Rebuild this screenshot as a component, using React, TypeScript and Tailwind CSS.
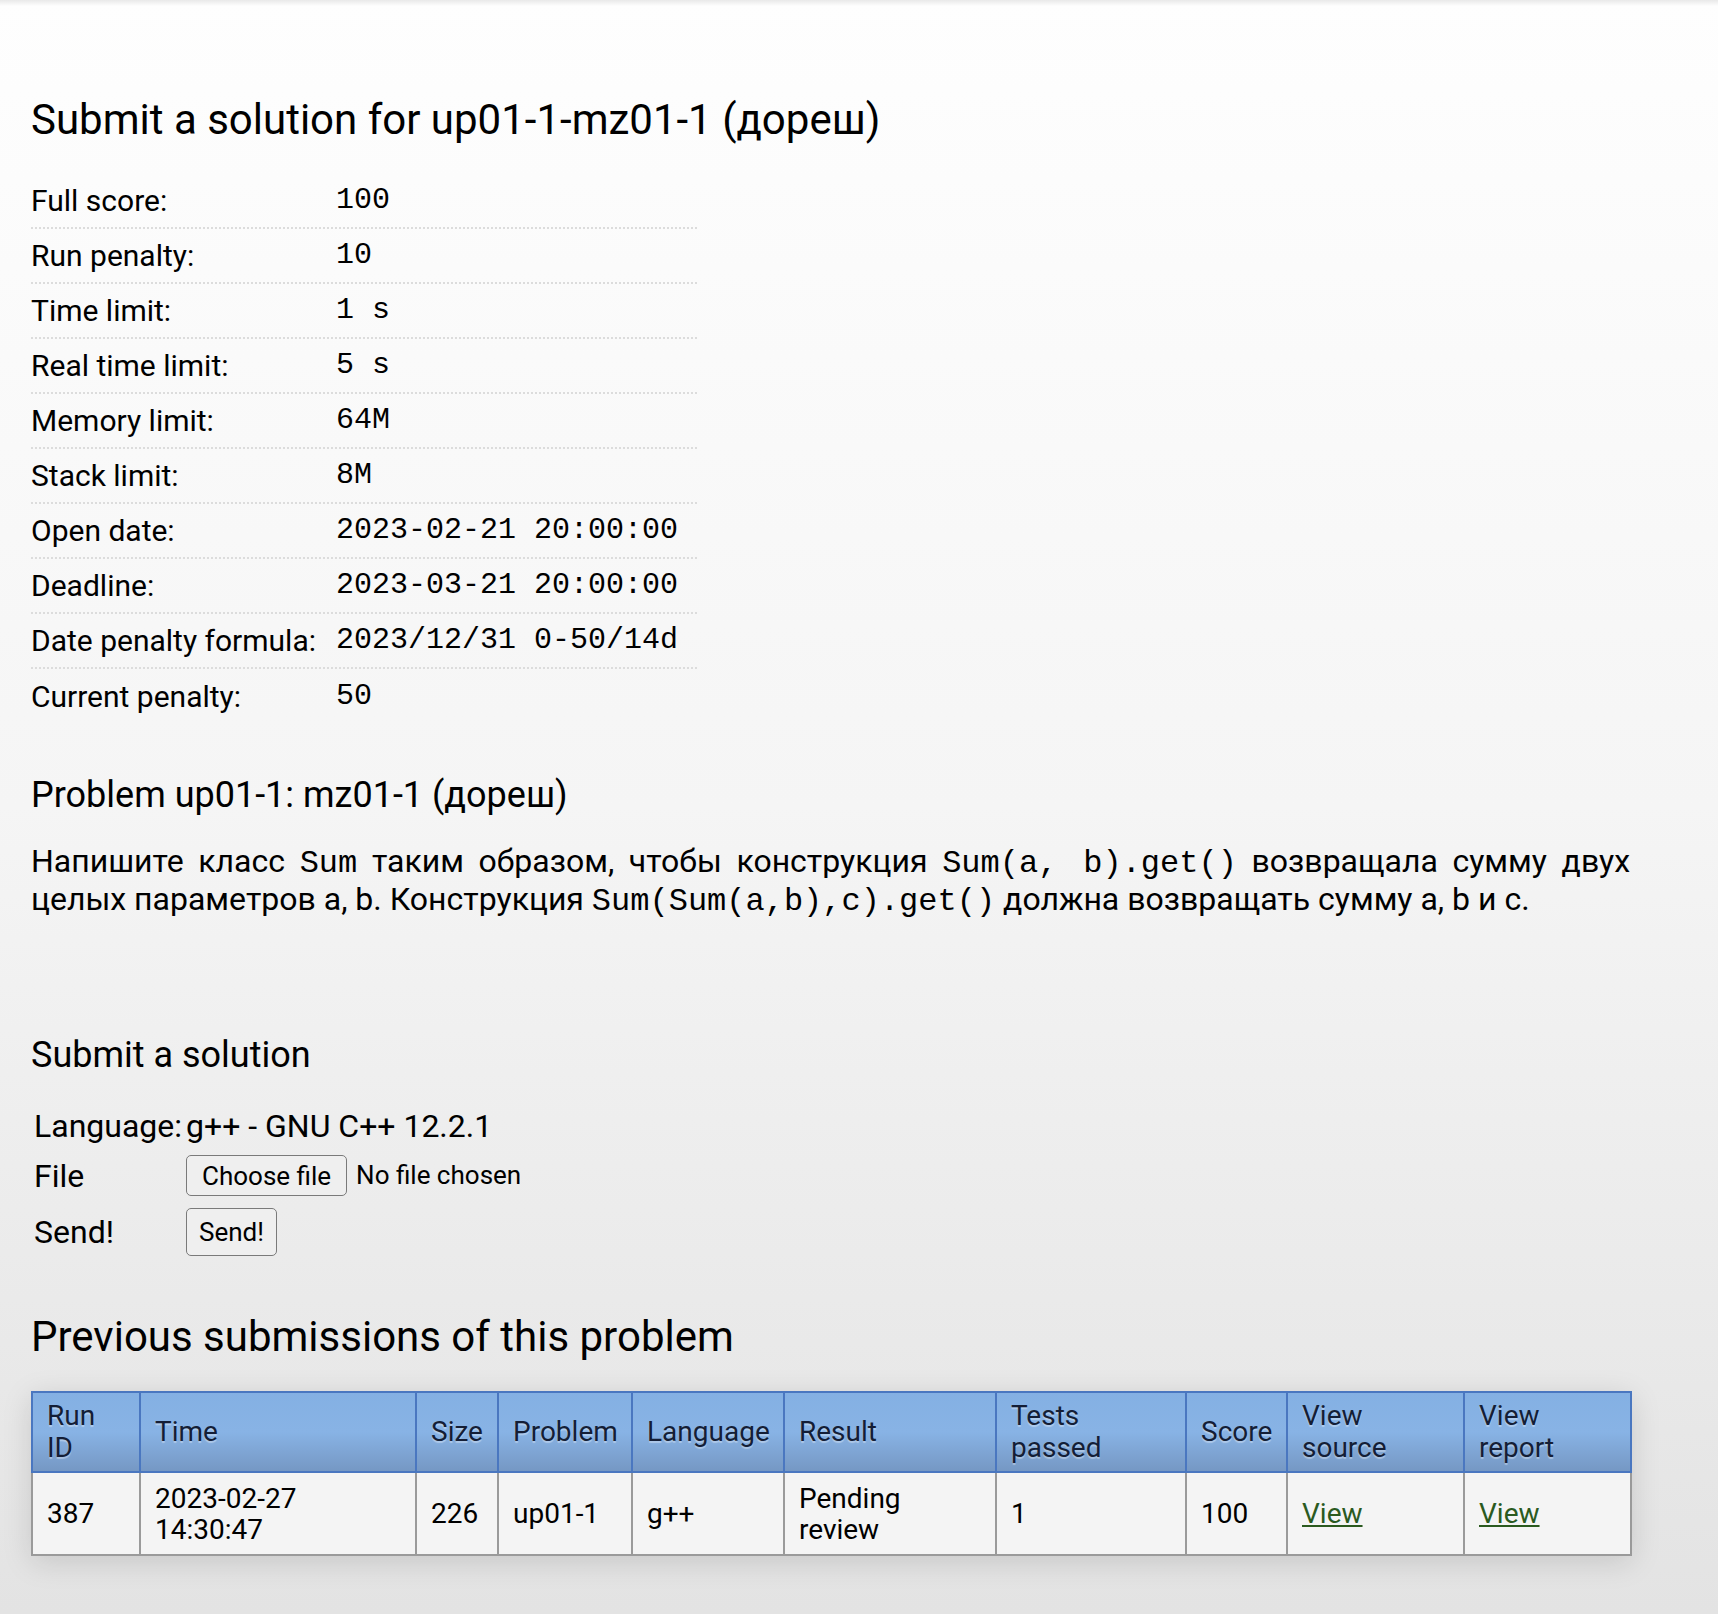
const info: [string, string][] = [
  ["Full score:", "100"],
  ["Run penalty:", "10"],
  ["Time limit:", "1 s"],
  ["Real time limit:", "5 s"],
  ["Memory limit:", "64M"],
  ["Stack limit:", "8M"],
  ["Open date:", "2023-02-21 20:00:00"],
  ["Deadline:", "2023-03-21 20:00:00"],
  ["Date penalty formula:", "2023/12/31 0-50/14d"],
  ["Current penalty:", "50"],
];

const cols = [108, 276, 82, 134, 152, 212, 190, 101, 177, 167];

const mono = "font-['Liberation_Mono','Courier_New',monospace]";
const code = `${mono} text-[32px] leading-none`;

export default function App() {
  return (
    <div className="min-h-[1614px] bg-gradient-to-b from-[#fefefe] via-[#f5f5f5] to-[#e3e3e3] font-['Roboto',sans-serif] text-black">
      <div className="h-[6px] bg-gradient-to-b from-[#e9e9e9] to-transparent" />
      <div className="pl-[31px] pr-[88px] pb-[40px]">
        {/* Title */}
        <h1 className="mt-[90px] text-[42px] leading-[48px] font-normal whitespace-nowrap">
          Submit a solution for up01-1-mz01-1 (дореш)
        </h1>

        {/* Problem info */}
        <div className="mt-[30px] w-[666px]">
          {info.map(([k, v], i) => (
            <div
              key={k}
              className={`grid grid-cols-[305px_1fr] items-center h-[55px] ${
                i < info.length - 1 ? "border-b-2 border-dotted border-[#dcdcdc]" : ""
              }`}
            >
              <div className="text-[30px]">{k}</div>
              <div className={`${mono} text-[30px] whitespace-pre`}>{v}</div>
            </div>
          ))}
        </div>

        {/* Statement */}
        <h2 className="mt-[49px] text-[36px] leading-[44px] font-normal">
          Problem up01-1: mz01-1 (дореш)
        </h2>
        <p className="mt-[25px] text-[32px] leading-[38px] text-justify">
          Напишите класс <span className={code}>Sum</span> таким образом, чтобы конструкция{" "}
          <span className={code}>Sum(a, b).get()</span> возвращала сумму двух целых параметров a,
          b. Конструкция <span className={code}>Sum(Sum(a,b),c).get()</span> должна возвращать
          сумму a, b и c.
        </p>

        {/* Submit form */}
        <h2 className="mt-[115px] text-[36px] leading-[44px] font-normal">Submit a solution</h2>
        <div className="mt-[26px] pl-[3px] text-[32px]">
          <div className="flex items-center h-[45px]">
            <div className="w-[152px]">Language:</div>
            <div>g++ - GNU C++ 12.2.1</div>
          </div>
          <div className="flex items-center h-[55px]">
            <div className="w-[152px]">File</div>
            <button className="h-[41px] px-[15px] border-[1.5px] border-[#7a7a7a] rounded-[5px] bg-[#efefef] text-[26px] leading-none">
              Choose file
            </button>
            <span className="ml-[9px] text-[26px]">No file chosen</span>
          </div>
          <div className="flex items-center h-[58px]">
            <div className="w-[152px]">Send!</div>
            <button className="h-[48px] px-[12px] border-[1.5px] border-[#7a7a7a] rounded-[5px] bg-[#efefef] text-[26px] leading-none">
              Send!
            </button>
          </div>
        </div>

        {/* Previous submissions */}
        <h2 className="mt-[52px] text-[42px] leading-[48px] font-normal">
          Previous submissions of this problem
        </h2>
        <table className="mt-[30px] w-[1599px] table-fixed border-collapse shadow-[0_6px_28px_rgba(0,0,0,0.13)]">
          <colgroup>
            {cols.map((w, i) => (
              <col key={i} style={{ width: w }} />
            ))}
          </colgroup>
          <thead>
            <tr className="h-[80px] bg-gradient-to-b from-[#84b0e3] via-[#88b3e5] to-[#7597c3]">
              {["Run ID", "Time", "Size", "Problem", "Language", "Result", "Tests passed", "Score", "View source", "View report"].map(
                (h) => (
                  <th
                    key={h}
                    className="border-2 border-[#4a77c0] px-[14px] text-left align-middle text-[28px] leading-[32px] font-normal text-[#141e36] [text-shadow:0_2px_1px_rgba(255,255,255,0.35)]"
                  >
                    {h}
                  </th>
                )
              )}
            </tr>
          </thead>
          <tbody>
            <tr className="h-[83px] bg-[#f4f4f4] text-[28px] leading-[31px]">
              <td className="border-2 border-[#9a9a9a] px-[14px]">387</td>
              <td className="border-2 border-[#9a9a9a] px-[14px]">
                2023-02-27
                <br />
                14:30:47
              </td>
              <td className="border-2 border-[#9a9a9a] px-[14px]">226</td>
              <td className="border-2 border-[#9a9a9a] px-[14px]">up01-1</td>
              <td className="border-2 border-[#9a9a9a] px-[14px]">g++</td>
              <td className="border-2 border-[#9a9a9a] px-[14px]">
                Pending
                <br />
                review
              </td>
              <td className="border-2 border-[#9a9a9a] px-[14px]">1</td>
              <td className="border-2 border-[#9a9a9a] px-[14px]">100</td>
              <td className="border-2 border-[#9a9a9a] px-[14px]">
                <a href="#" className="text-[#2b5a1f] underline">
                  View
                </a>
              </td>
              <td className="border-2 border-[#9a9a9a] px-[14px]">
                <a href="#" className="text-[#2b5a1f] underline">
                  View
                </a>
              </td>
            </tr>
          </tbody>
        </table>
      </div>
    </div>
  );
}
